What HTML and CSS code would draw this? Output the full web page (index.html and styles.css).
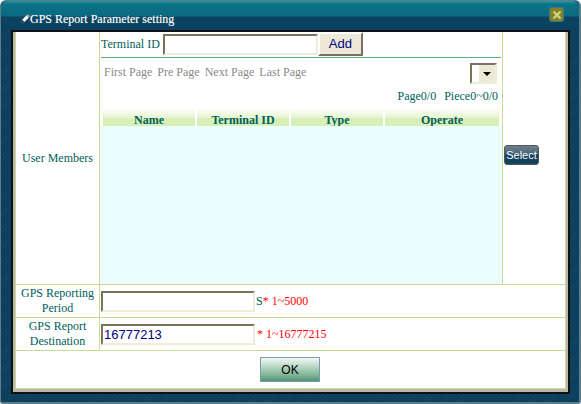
FILE: index.html
```html
<!DOCTYPE html>
<html lang="en">
<head>
    <meta charset="UTF-8">
    <title>GPS Report Parameter setting</title>
    <link rel="stylesheet" href="styles.css">
</head>
<body>
    <div class="window">
        <div class="titlebar">
            <svg class="pen" width="9" height="9" viewBox="0 0 8 8">
                <path d="M0 8 L1 5 L5 1 L7 3 L3 7 Z" fill="#fff"/>
                <path d="M5 1 L6 0 L8 2 L7 3 Z" fill="#e88"/>
                <path d="M0 8 L1 5 L3 7 Z" fill="#222"/>
            </svg>
            <span class="title">GPS Report Parameter setting</span>
            <span class="close">
                <svg width="10" height="10" viewBox="0 0 10 10">
                    <path d="M1.5 1.5 L8.5 8.5 M8.5 1.5 L1.5 8.5" stroke="#c9d77e" stroke-width="2.4"/>
                </svg>
            </span>
        </div>
        <div class="panel">
            <div class="row row-members">
                <div class="label">User Members</div>
                <div class="members">
                    <div class="add-bar">
                        <span>Terminal ID</span>
                        <input class="input input-terminal" type="text">
                        <button class="btn-add" type="button">Add</button>
                    </div>
                    <div class="pager">
                        <span>First Page</span>
                        <span>Pre Page</span>
                        <span>Next Page</span>
                        <span>Last Page</span>
                        <span class="select"><span class="arrow"></span></span>
                    </div>
                    <div class="counts"><span>Page0/0</span><span>Piece0~0/0</span></div>
                    <div class="grid-head">
                        <div class="col-name">Name</div>
                        <div class="col-id">Terminal ID</div>
                        <div class="col-type">Type</div>
                        <div class="col-op">Operate</div>
                    </div>
                    <div class="grid-body"></div>
                </div>
                <div class="select-cell"><button class="btn-select" type="button">Select</button></div>
            </div>
            <div class="row row-field">
                <div class="label">GPS Reporting Period</div>
                <div class="field">
                    <input class="input input-field" type="text">
                    <span class="unit">S</span><span class="hint">* 1~5000</span>
                </div>
            </div>
            <div class="row row-field">
                <div class="label">GPS Report Destination</div>
                <div class="field">
                    <input class="input input-field" type="text" value="16777213">
                    <span class="hint hint-gap">* 1~16777215</span>
                </div>
            </div>
            <div class="footer"><button class="btn-ok" type="button">OK</button></div>
        </div>
    </div>
</body>
</html>
```

FILE: styles.css
```css
/* Dialog frame */
body {
    margin: 0;
    font-family: "Liberation Serif", serif;
    font-size: 12px;
    color: #00605a;
}

.window {
    box-sizing: border-box;
    width: 581px;
    height: 404px;
    padding: 0 9px 8px 10px;
    display: flex;
    flex-direction: column;
    border: 1px solid #5d7d88;
    border-width: 1px 2px 2px 1px;
    border-radius: 6px 6px 3px 3px;
    background: repeating-linear-gradient(135deg, #0c3d5c 0, #0c3d5c 2px, #104863 2px, #104863 3px);
}

.titlebar {
    height: 29px;
    flex: none;
    margin: 0 -9px 0 -10px;
    padding: 0 15px 0 20px;
    display: flex;
    align-items: center;
    background: linear-gradient(#2a9ba3 0, #0b7287 3px, #0a6a80 15px, #0a4560 16px, #0b4060 30px);
    border-radius: 6px 6px 0 0;
}

.pen {
    margin-top: 5px;
}

.title {
    font-size: 12px;
    color: #fff;
    text-shadow: 0 0 1px rgba(255, 255, 255, 0.4);
    margin-top: 7px;
}

.close {
    box-sizing: border-box;
    width: 15px;
    height: 15px;
    margin-left: auto;
    margin-top: -2px;
    display: flex;
    align-items: center;
    justify-content: center;
    background: #8a7f28;
    border: 1px solid #2c7f88;
    border-radius: 3px;
}

.panel {
    flex: 1;
    display: flex;
    flex-direction: column;
    box-sizing: border-box;
    background: #fff;
    border: 2px solid #111;
    box-shadow:
        inset 2px 0 0 #b8b8ac,
        inset -2px 0 0 #b8b8ac,
        inset 0 -3px 0 #b8b8ac,
        inset 3px 0 0 #c5dc97,
        inset -3px 0 0 #c5dc97,
        inset 0 -4px 0 #c5dc97;
    padding: 0 3px 4px 3px;
}

/* Rows */
.row {
    display: flex;
    border-bottom: 1px solid #c5dc97;
}

.row-members {
    height: 252px;
}

.row-field {
    height: 32px;
}

.label {
    box-sizing: border-box;
    width: 84px;
    flex: none;
    padding: 0 4px;
    display: flex;
    align-items: center;
    justify-content: center;
    text-align: center;
    line-height: 15px;
    border-right: 1px solid #c5dc97;
}

/* Members column */
.members {
    width: 402px;
    flex: none;
    box-sizing: border-box;
    padding: 0 1px;
    display: flex;
    flex-direction: column;
}

.add-bar {
    height: 25px;
    flex: none;
    display: flex;
    align-items: center;
    border-bottom: 1px solid #5cb083;
}

.input {
    box-sizing: border-box;
    border: 2px solid;
    border-color: #77735f #f0ecdc #f0ecdc #77735f;
    background: #fff;
    font-family: "Liberation Sans", sans-serif;
    font-size: 13px;
    color: #000080;
    padding: 0 1px;
    outline: 0;
}

.input-terminal {
    width: 155px;
    height: 21px;
    margin-left: 3px;
}

.btn-add {
    width: 45px;
    height: 24px;
    padding: 0;
    margin-top: -2px;
    background: #ece9d8;
    border: 2px solid;
    border-color: #fff #77735f #77735f #fff;
    font-family: "Liberation Sans", sans-serif;
    font-size: 13px;
    color: #000080;
}

.pager {
    height: 27px;
    box-sizing: border-box;
    padding: 1px 0 0 3px;
    flex: none;
    display: flex;
    align-items: center;
    gap: 5px;
    color: #8a8a8a;
}

.select {
    box-sizing: border-box;
    width: 27px;
    height: 21px;
    margin-left: auto;
    margin-right: 4px;
    margin-top: 2px;
    display: flex;
    justify-content: flex-end;
    border: 2px solid;
    border-color: #77735f #f0ecdc #f0ecdc #77735f;
}

.arrow {
    width: 16px;
    background: #ece9d8;
    position: relative;
}

.arrow::after {
    content: "";
    position: absolute;
    left: 4px;
    top: 7px;
    border: 4px solid transparent;
    border-top: 4px solid #000;
    border-bottom: 0;
}

.counts {
    height: 22px;
    flex: none;
    display: flex;
    justify-content: flex-end;
    align-items: center;
    gap: 8px;
    padding-right: 3px;
}

.grid-head {
    height: 18px;
    flex: none;
    display: flex;
    gap: 2px;
    margin: 1px 2px 0 2px;
    font-weight: bold;
}

.grid-head div {
    box-sizing: border-box;
    padding-top: 5px;
    line-height: 14px;
    text-align: center;
    background: linear-gradient(#fff 0, #e6f5cf 10px, #d8efb8 10px, #d8efb8 100%);
}

.col-name,
.col-id,
.col-type {
    width: 92px;
}

.col-op {
    width: 114px;
}

.grid-body {
    flex: 1;
    margin: 0 -1px;
    background: #ecffff;
}

.select-cell {
    flex: 1;
    display: flex;
    align-items: center;
    padding: 0 0 6px 1px;
    border-left: 1px solid #c5dc97;
}

.btn-select {
    width: 35px;
    height: 20px;
    padding: 0;
    border: 1px solid #555;
    border-radius: 3px;
    background: linear-gradient(#6b7f90 0, #4a6478 45%, #123e5c 50%, #144460 100%);
    color: #fff;
    font-family: "Liberation Sans", sans-serif;
    font-size: 11px;
}

/* Field rows */
.field {
    flex: 1;
    display: flex;
    align-items: center;
    padding-left: 1px;
}

.input-field {
    width: 154px;
    height: 21px;
}

.unit {
    margin-left: 1px;
}

.hint {
    color: #f00;
}

.hint-gap {
    margin-left: 2px;
}

.footer {
    flex: 1;
    display: flex;
    align-items: center;
    justify-content: center;
    padding-right: 1px;
}

.btn-ok {
    width: 60px;
    height: 25px;
    padding: 0;
    border: 1px solid #7a9ab0;
    background: linear-gradient(#f4f8f4 0, #7fb596 75%, #4f9270 100%);
    color: #000;
    font-family: "Liberation Sans", sans-serif;
    font-size: 12px;
}
```
